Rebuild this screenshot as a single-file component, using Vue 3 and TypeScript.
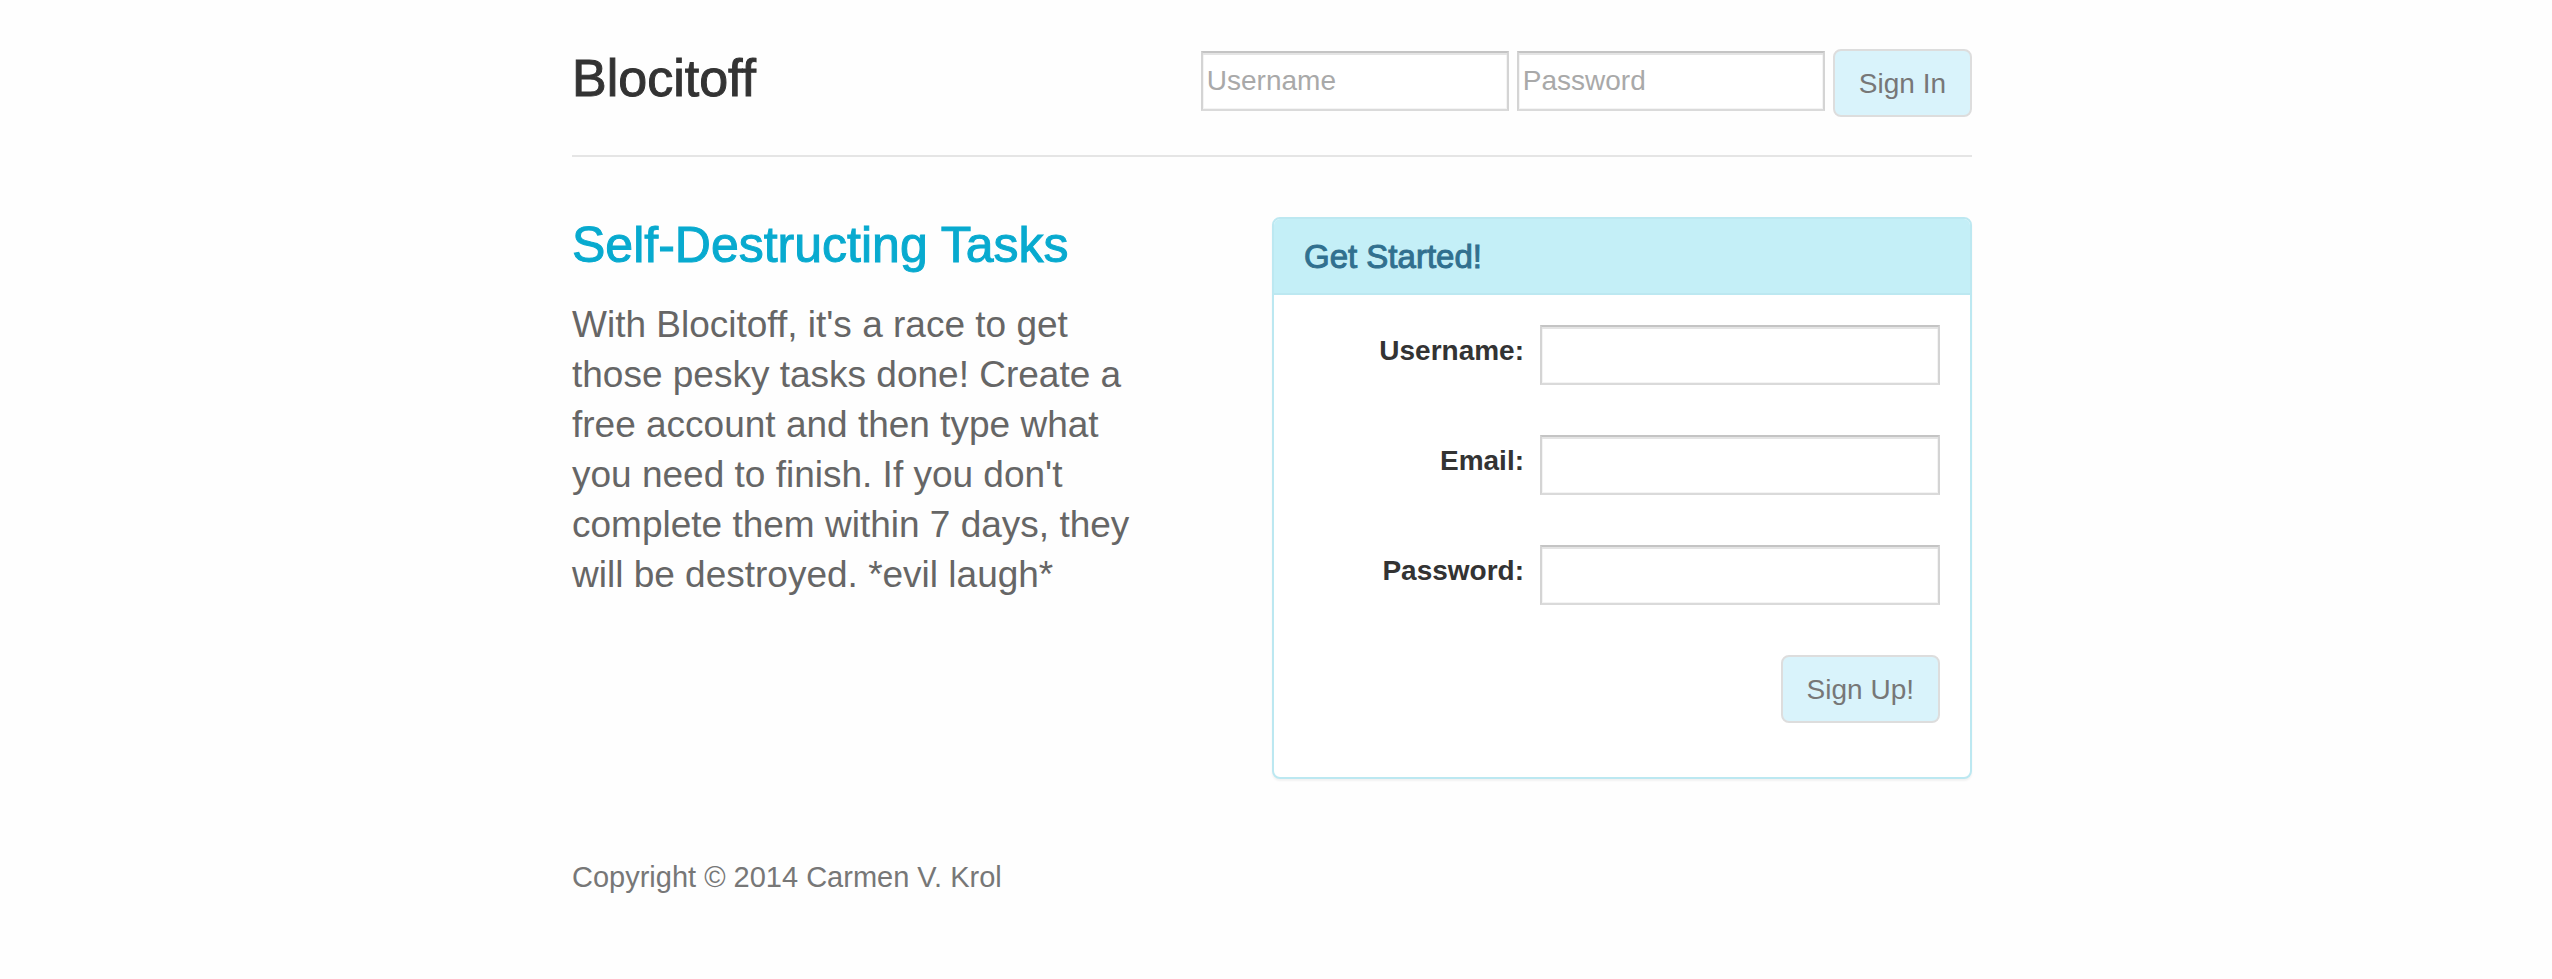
<script setup lang="ts">
import { reactive } from 'vue'

interface Field {
  id: 'username' | 'email' | 'password'
  label: string
  type: string
}

const fields: Field[] = [
  { id: 'username', label: 'Username:', type: 'text' },
  { id: 'email', label: 'Email:', type: 'email' },
  { id: 'password', label: 'Password:', type: 'password' },
]

const login = reactive({ username: '', password: '' })
const signup = reactive({ username: '', email: '', password: '' })
</script>

<template>
  <div class="page">
    <div class="container">
      <header class="masthead">
        <h1 class="brand">Blocitoff</h1>
        <form class="login" @submit.prevent>
          <input v-model="login.username" class="field" type="text" placeholder="Username" aria-label="Username" />
          <input v-model="login.password" class="field" type="password" placeholder="Password" aria-label="Password" />
          <button class="btn" type="submit">Sign In</button>
        </form>
      </header>

      <main class="columns">
        <section class="intro">
          <h2 class="title">Self-Destructing Tasks</h2>
          <p class="lead">
            With Blocitoff, it's a race to get those pesky tasks done! Create a free account and then
            type what you need to finish. If you don't complete them within 7 days, they will be
            destroyed. *evil laugh*
          </p>
        </section>

        <section class="panel">
          <h3 class="panel-title">Get Started!</h3>
          <form class="signup" @submit.prevent>
            <div v-for="field in fields" :key="field.id" class="row">
              <label class="label" :for="field.id">{{ field.label }}</label>
              <input :id="field.id" v-model="signup[field.id]" class="field" :type="field.type" />
            </div>
            <div class="actions">
              <button class="btn" type="submit">Sign Up!</button>
            </div>
          </form>
        </section>
      </main>

      <footer class="footer">Copyright © 2014 Carmen V. Krol</footer>
    </div>
  </div>
</template>

<style>
body {
  margin: 0;
  background: #fefefe;
}
</style>

<style scoped>
.page {
  padding-right: 8px;
}

.container {
  box-sizing: border-box;
  max-width: 1400px;
  margin: 0 auto;
  padding: 49px 0;
  font-family: "Liberation Sans", Arial, sans-serif;
  font-size: 28px;
  line-height: 40px;
  color: #333;
}

.masthead {
  display: flex;
  align-items: flex-start;
  justify-content: space-between;
  padding-bottom: 38px;
  border-bottom: 2px solid #e5e5e5;
}

.brand,
.title {
  margin: 0;
  font-weight: 400;
  -webkit-text-stroke: 1px currentColor;
}

.brand {
  font-size: 52px;
  line-height: 58px;
}

.login {
  display: flex;
  align-items: center;
  gap: 8px;
}

.field {
  box-sizing: border-box;
  height: 60px;
  padding: 0 4px;
  border: 2px solid #d4d4d4;
  border-top-color: #c4c4c4;
  border-bottom-color: #dadada;
  border-radius: 0;
  background: #fff;
  box-shadow: inset 0 2px 0 #e4e4e4, inset 0 0 0 1px #f4f4f4;
  font: inherit;
  color: #333;
}

.login .field {
  width: 308px;
  margin-bottom: 4px;
}

.field::placeholder {
  color: #a9a9a9;
  opacity: 1;
}

.btn {
  height: 68px;
  padding: 2px 24px 0;
  border: 2px solid #ddd;
  border-radius: 8px;
  background: #d9f3fb;
  font: inherit;
  color: #777;
  cursor: pointer;
}

.columns {
  display: grid;
  grid-template-columns: 1fr 1fr;
  padding-top: 60px;
}

.intro {
  padding-right: 112px;
}

.title {
  font-size: 50px;
  line-height: 56px;
  color: #08aacf;
}

.lead {
  margin: 27px 0 0;
  font-size: 37px;
  line-height: 50px;
  color: #666;
}

.panel {
  border: 2px solid #bce8f1;
  border-radius: 8px;
  background: #fff;
  box-shadow: 0 2px 2px rgba(0, 0, 0, 0.05);
}

.panel-title {
  margin: 0;
  padding: 20px 30px 18px;
  border-bottom: 2px solid #bce8f1;
  border-radius: 6px 6px 0 0;
  background: #c4eff7;
  font-size: 33px;
  font-weight: 400;
  line-height: 36px;
  color: #31708f;
  -webkit-text-stroke: 1px currentColor;
}

.signup {
  padding: 30px 30px 54px;
}

.row {
  display: grid;
  grid-template-columns: 1fr 400px;
  column-gap: 16px;
  margin-bottom: 50px;
}

.label {
  padding-top: 6px;
  font-weight: 700;
  text-align: right;
}

.actions {
  display: flex;
  justify-content: flex-end;
}

.footer {
  margin-top: 78px;
  font-size: 29px;
  color: #777;
}
</style>
